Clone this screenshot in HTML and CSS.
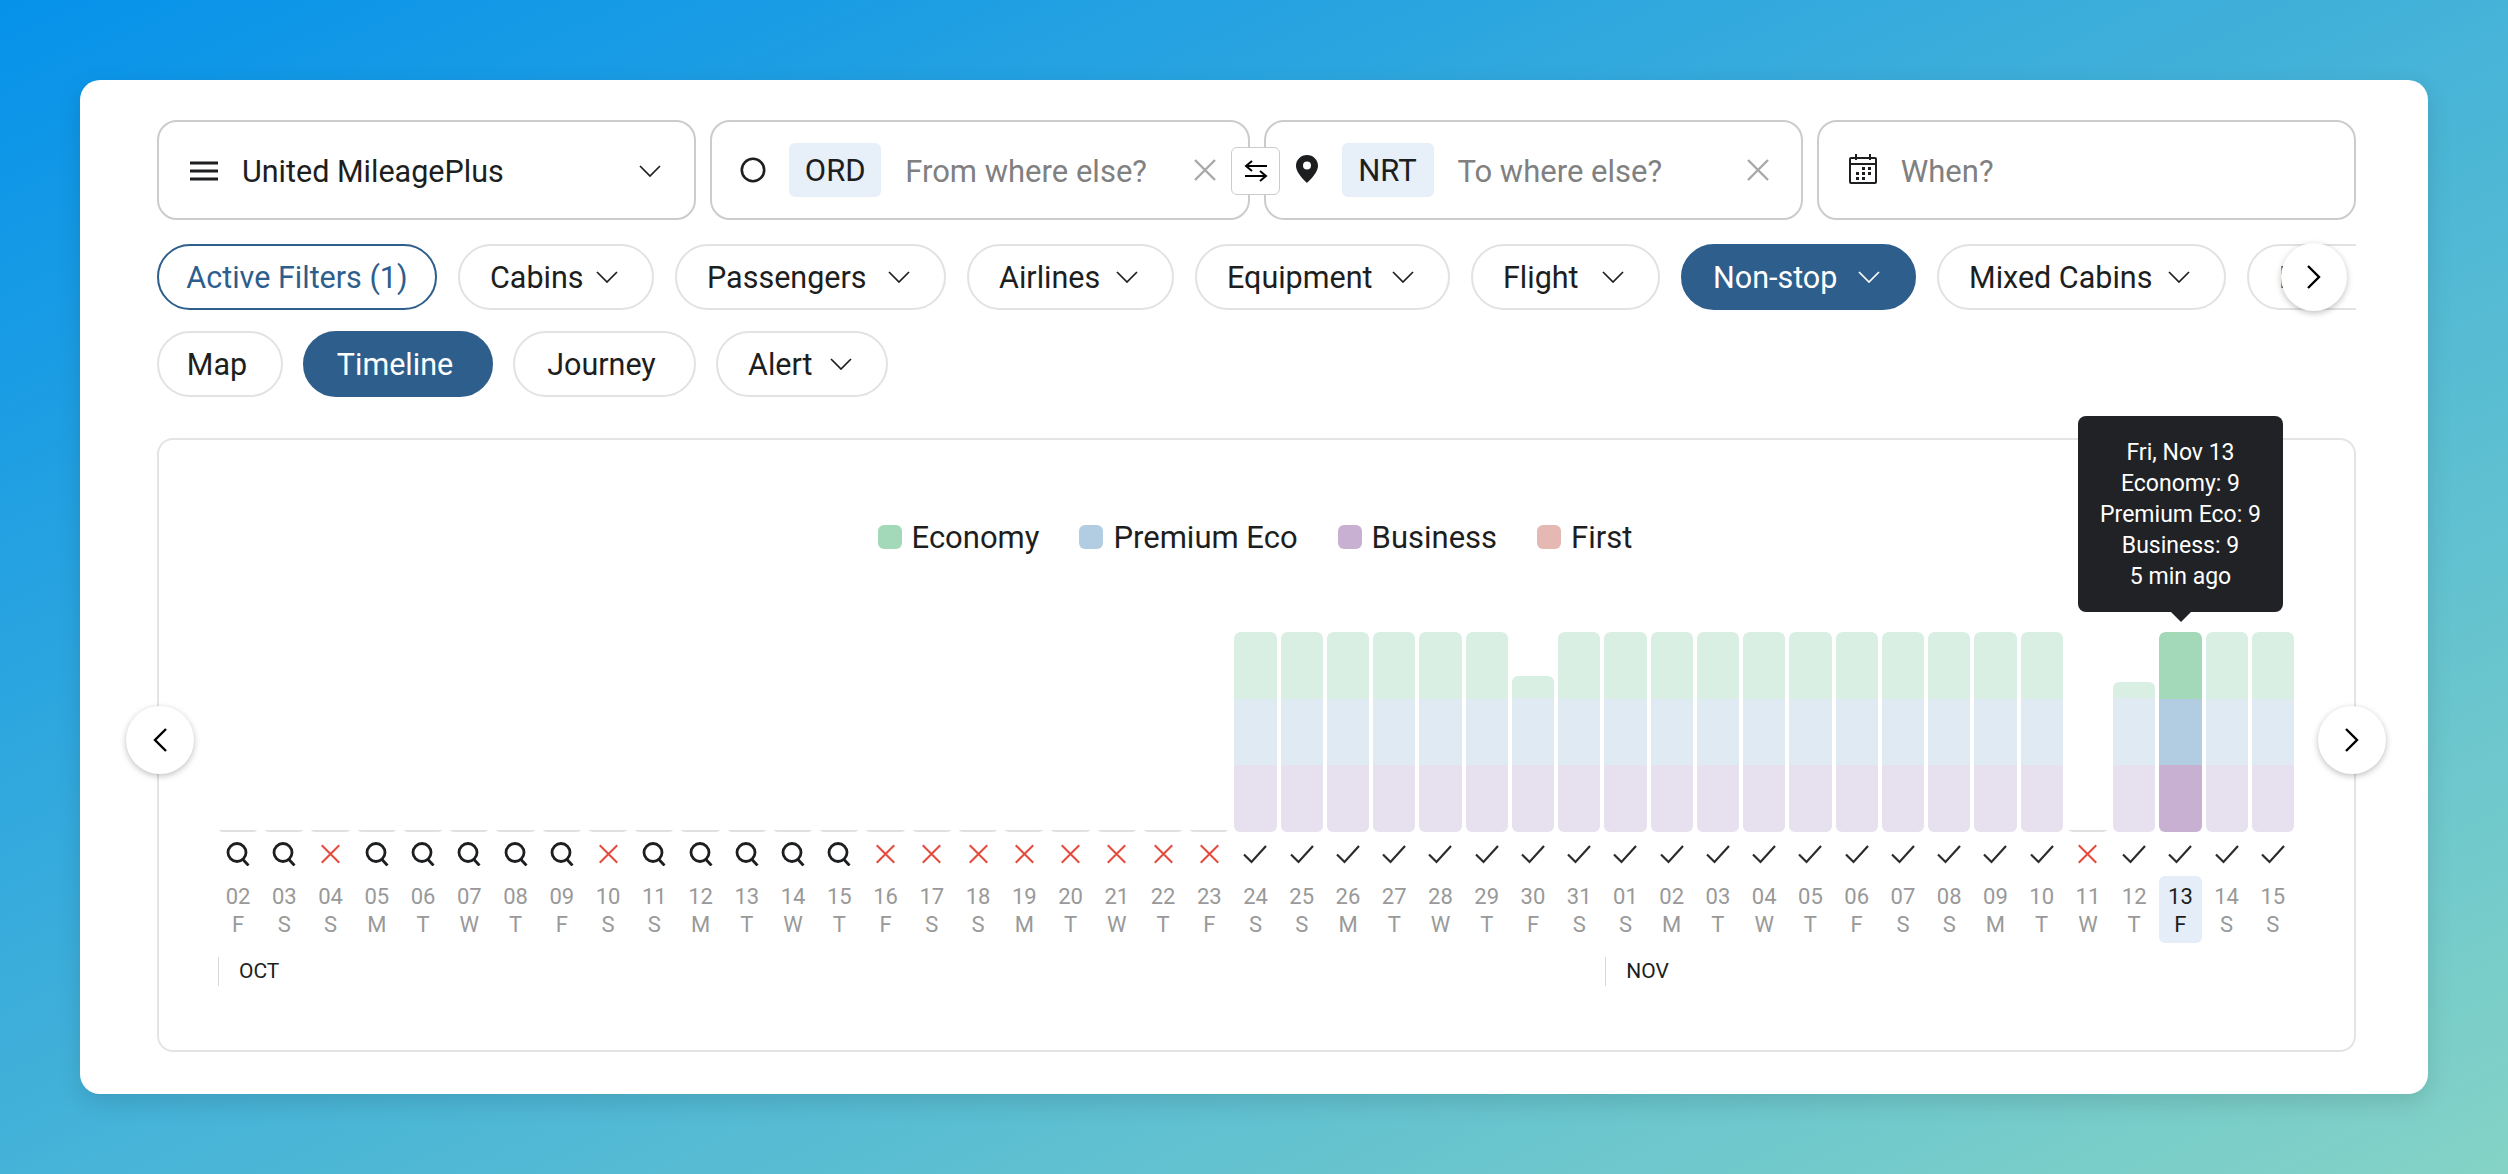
FILE: index.html
```html
<!DOCTYPE html>
<html>
<head>
	<title>Award Timeline</title>

	<link rel="stylesheet" href="styles.css">
</head>
<body>
	<svg class="iconDefs">
		<symbol id="chevron" viewBox="0 0 22 12"><path d="M1 1l10 10L21 1" fill="none" stroke="currentColor" stroke-width="1.7"/></symbol>
		<symbol id="cross" viewBox="0 0 24 22"><path d="M2 1l20 20M22 1L2 21" fill="none" stroke="currentColor" stroke-width="2.4"/></symbol>
		<symbol id="search" viewBox="0 0 24 24"><circle cx="11" cy="10.5" r="9" fill="none" stroke="currentColor" stroke-width="2.8"/><path d="M16.5 17l6 6.5" fill="none" stroke="currentColor" stroke-width="2.8"/></symbol>
		<symbol id="check" viewBox="0 0 24 20"><path d="M1 10.5l7.5 7.5L23 2" fill="none" stroke="currentColor" stroke-width="2.2"/></symbol>
		<symbol id="prev" viewBox="0 0 14 24"><path d="M13 1L2 12l11 11" fill="none" stroke="currentColor" stroke-width="2.4"/></symbol>
		<symbol id="next" viewBox="0 0 14 24"><path d="M1 1l11 11L1 23" fill="none" stroke="currentColor" stroke-width="2.4"/></symbol>
	</svg>

	<main class="card">
		<div class="search-row">
			<div class="field">
				<svg class="icon-menu" viewBox="0 0 28 20"><path d="M0 2h28M0 10h28M0 18h28" stroke="currentColor" stroke-width="3"/></svg>
				<span class="field-value">United MileagePlus</span>
				<svg class="chevron field-chevron"><use href="#chevron"/></svg>
			</div>
			<div class="field">
				<svg class="icon-origin" viewBox="0 0 26 26"><circle cx="13" cy="13" r="11.2" fill="none" stroke="currentColor" stroke-width="2.6"/></svg>
				<span class="code">ORD</span>
				<span class="placeholder">From where else?</span>
				<svg class="clear"><use href="#cross"/></svg>
			</div>
			<div class="field">
				<svg class="icon-pin" viewBox="0 0 22 28"><path fill-rule="evenodd" d="M11 0C4.9 0 0 4.8 0 10.8 0 18.5 11 28 11 28s11-9.5 11-17.2C22 4.8 17.1 0 11 0zm0 14.5a4 4 0 1 1 0-8 4 4 0 0 1 0 8z" fill="currentColor"/></svg>
				<span class="code">NRT</span>
				<span class="placeholder">To where else?</span>
				<svg class="clear"><use href="#cross"/></svg>
			</div>
			<div class="field">
				<svg class="icon-calendar" viewBox="0 0 28 30">
					<path d="M2 4h24a1 1 0 0 1 1 1v23a1 1 0 0 1-1 1H2a1 1 0 0 1-1-1V5a1 1 0 0 1 1-1zM1 10h26M7 0v6M21 0v6" fill="none" stroke="currentColor" stroke-width="2"/>
					<path d="M13 13h3v3h-3zM19 13h3v3h-3zM7 18h3v3H7zM13 18h3v3h-3zM19 18h3v3h-3zM7 23h3v3H7zM13 23h3v3h-3z" fill="currentColor"/>
				</svg>
				<span class="placeholder">When?</span>
			</div>
			<button class="swap">
				<svg viewBox="0 0 24 22"><path d="M23 6H2M8 1L2 6l6 5M1 16h21M16 11l6 5-6 5" fill="none" stroke="currentColor" stroke-width="2"/></svg>
			</button>
		</div>

		<div class="filter-wrap">
			<div class="pill-row filters">
				<span class="pill pill-outline pill-active">Active Filters (1)</span>
				<span class="pill pill-cabins">Cabins <svg class="chevron"><use href="#chevron"/></svg></span>
				<span class="pill pill-passengers">Passengers <svg class="chevron"><use href="#chevron"/></svg></span>
				<span class="pill pill-airlines">Airlines <svg class="chevron"><use href="#chevron"/></svg></span>
				<span class="pill pill-equipment">Equipment <svg class="chevron"><use href="#chevron"/></svg></span>
				<span class="pill pill-flight">Flight <svg class="chevron"><use href="#chevron"/></svg></span>
				<span class="pill pill-on pill-nonstop">Non-stop <svg class="chevron"><use href="#chevron"/></svg></span>
				<span class="pill pill-mixed">Mixed Cabins <svg class="chevron"><use href="#chevron"/></svg></span>
				<span class="pill pill-fare">Fare <svg class="chevron"><use href="#chevron"/></svg></span>
			</div>
			<button class="round-btn filters-next"><svg><use href="#next"/></svg></button>
		</div>

		<div class="pill-row views">
			<span class="pill pill-plain pill-map">Map</span>
			<span class="pill pill-plain pill-on pill-timeline">Timeline</span>
			<span class="pill pill-plain pill-journey">Journey</span>
			<span class="pill pill-alert">Alert <svg class="chevron"><use href="#chevron"/></svg></span>
		</div>

		<section class="chart">
			<div class="legend">
				<span class="legend-item"><i class="swatch economy"></i>Economy</span>
				<span class="legend-item"><i class="swatch premium"></i>Premium Eco</span>
				<span class="legend-item"><i class="swatch business"></i>Business</span>
				<span class="legend-item"><i class="swatch first"></i>First</span>
			</div>

			<div class="days">
				<div class="day"><div class="bar"></div><svg class="status"><use href="#search"/></svg><div class="date">02<br>F</div></div>
				<div class="day"><div class="bar"></div><svg class="status"><use href="#search"/></svg><div class="date">03<br>S</div></div>
				<div class="day"><div class="bar"></div><svg class="status miss"><use href="#cross"/></svg><div class="date">04<br>S</div></div>
				<div class="day"><div class="bar"></div><svg class="status"><use href="#search"/></svg><div class="date">05<br>M</div></div>
				<div class="day"><div class="bar"></div><svg class="status"><use href="#search"/></svg><div class="date">06<br>T</div></div>
				<div class="day"><div class="bar"></div><svg class="status"><use href="#search"/></svg><div class="date">07<br>W</div></div>
				<div class="day"><div class="bar"></div><svg class="status"><use href="#search"/></svg><div class="date">08<br>T</div></div>
				<div class="day"><div class="bar"></div><svg class="status"><use href="#search"/></svg><div class="date">09<br>F</div></div>
				<div class="day"><div class="bar"></div><svg class="status miss"><use href="#cross"/></svg><div class="date">10<br>S</div></div>
				<div class="day"><div class="bar"></div><svg class="status"><use href="#search"/></svg><div class="date">11<br>S</div></div>
				<div class="day"><div class="bar"></div><svg class="status"><use href="#search"/></svg><div class="date">12<br>M</div></div>
				<div class="day"><div class="bar"></div><svg class="status"><use href="#search"/></svg><div class="date">13<br>T</div></div>
				<div class="day"><div class="bar"></div><svg class="status"><use href="#search"/></svg><div class="date">14<br>W</div></div>
				<div class="day"><div class="bar"></div><svg class="status"><use href="#search"/></svg><div class="date">15<br>T</div></div>
				<div class="day"><div class="bar"></div><svg class="status miss"><use href="#cross"/></svg><div class="date">16<br>F</div></div>
				<div class="day"><div class="bar"></div><svg class="status miss"><use href="#cross"/></svg><div class="date">17<br>S</div></div>
				<div class="day"><div class="bar"></div><svg class="status miss"><use href="#cross"/></svg><div class="date">18<br>S</div></div>
				<div class="day"><div class="bar"></div><svg class="status miss"><use href="#cross"/></svg><div class="date">19<br>M</div></div>
				<div class="day"><div class="bar"></div><svg class="status miss"><use href="#cross"/></svg><div class="date">20<br>T</div></div>
				<div class="day"><div class="bar"></div><svg class="status miss"><use href="#cross"/></svg><div class="date">21<br>W</div></div>
				<div class="day"><div class="bar"></div><svg class="status miss"><use href="#cross"/></svg><div class="date">22<br>T</div></div>
				<div class="day"><div class="bar"></div><svg class="status miss"><use href="#cross"/></svg><div class="date">23<br>F</div></div>
				<div class="day"><div class="bar full"><i class="economy"></i><i class="premium"></i><i class="business"></i></div><svg class="status ok"><use href="#check"/></svg><div class="date">24<br>S</div></div>
				<div class="day"><div class="bar full"><i class="economy"></i><i class="premium"></i><i class="business"></i></div><svg class="status ok"><use href="#check"/></svg><div class="date">25<br>S</div></div>
				<div class="day"><div class="bar full"><i class="economy"></i><i class="premium"></i><i class="business"></i></div><svg class="status ok"><use href="#check"/></svg><div class="date">26<br>M</div></div>
				<div class="day"><div class="bar full"><i class="economy"></i><i class="premium"></i><i class="business"></i></div><svg class="status ok"><use href="#check"/></svg><div class="date">27<br>T</div></div>
				<div class="day"><div class="bar full"><i class="economy"></i><i class="premium"></i><i class="business"></i></div><svg class="status ok"><use href="#check"/></svg><div class="date">28<br>W</div></div>
				<div class="day"><div class="bar full"><i class="economy"></i><i class="premium"></i><i class="business"></i></div><svg class="status ok"><use href="#check"/></svg><div class="date">29<br>T</div></div>
				<div class="day"><div class="bar full"><i class="economy short"></i><i class="premium"></i><i class="business"></i></div><svg class="status ok"><use href="#check"/></svg><div class="date">30<br>F</div></div>
				<div class="day"><div class="bar full"><i class="economy"></i><i class="premium"></i><i class="business"></i></div><svg class="status ok"><use href="#check"/></svg><div class="date">31<br>S</div></div>
				<div class="day"><div class="bar full"><i class="economy"></i><i class="premium"></i><i class="business"></i></div><svg class="status ok"><use href="#check"/></svg><div class="date">01<br>S</div></div>
				<div class="day"><div class="bar full"><i class="economy"></i><i class="premium"></i><i class="business"></i></div><svg class="status ok"><use href="#check"/></svg><div class="date">02<br>M</div></div>
				<div class="day"><div class="bar full"><i class="economy"></i><i class="premium"></i><i class="business"></i></div><svg class="status ok"><use href="#check"/></svg><div class="date">03<br>T</div></div>
				<div class="day"><div class="bar full"><i class="economy"></i><i class="premium"></i><i class="business"></i></div><svg class="status ok"><use href="#check"/></svg><div class="date">04<br>W</div></div>
				<div class="day"><div class="bar full"><i class="economy"></i><i class="premium"></i><i class="business"></i></div><svg class="status ok"><use href="#check"/></svg><div class="date">05<br>T</div></div>
				<div class="day"><div class="bar full"><i class="economy"></i><i class="premium"></i><i class="business"></i></div><svg class="status ok"><use href="#check"/></svg><div class="date">06<br>F</div></div>
				<div class="day"><div class="bar full"><i class="economy"></i><i class="premium"></i><i class="business"></i></div><svg class="status ok"><use href="#check"/></svg><div class="date">07<br>S</div></div>
				<div class="day"><div class="bar full"><i class="economy"></i><i class="premium"></i><i class="business"></i></div><svg class="status ok"><use href="#check"/></svg><div class="date">08<br>S</div></div>
				<div class="day"><div class="bar full"><i class="economy"></i><i class="premium"></i><i class="business"></i></div><svg class="status ok"><use href="#check"/></svg><div class="date">09<br>M</div></div>
				<div class="day"><div class="bar full"><i class="economy"></i><i class="premium"></i><i class="business"></i></div><svg class="status ok"><use href="#check"/></svg><div class="date">10<br>T</div></div>
				<div class="day"><div class="bar"></div><svg class="status miss"><use href="#cross"/></svg><div class="date">11<br>W</div></div>
				<div class="day"><div class="bar full"><i class="economy shorter"></i><i class="premium"></i><i class="business"></i></div><svg class="status ok"><use href="#check"/></svg><div class="date">12<br>T</div></div>
				<div class="day selected"><div class="bar full"><i class="economy"></i><i class="premium"></i><i class="business"></i></div><svg class="status ok"><use href="#check"/></svg><div class="date">13<br>F</div></div>
				<div class="day"><div class="bar full"><i class="economy"></i><i class="premium"></i><i class="business"></i></div><svg class="status ok"><use href="#check"/></svg><div class="date">14<br>S</div></div>
				<div class="day"><div class="bar full"><i class="economy"></i><i class="premium"></i><i class="business"></i></div><svg class="status ok"><use href="#check"/></svg><div class="date">15<br>S</div></div>
			</div>

			<div class="months">
				<span class="month">OCT</span>
				<span class="month">NOV</span>
			</div>

			<div class="tooltip">
				Fri, Nov 13<br>
				Economy: 9<br>
				Premium Eco: 9<br>
				Business: 9<br>
				5 min ago
			</div>
			<button class="round-btn chart-prev"><svg><use href="#prev"/></svg></button>
			<button class="round-btn chart-next"><svg><use href="#next"/></svg></button>
		</section>
	</main>
</body>
</html>
```

FILE: styles.css
```css
:root {
	font-family: Roboto, "Noto Sans", sans-serif;
	color: #1d1e20;
}
html, body {
	height: 100%;
}
body {
	margin: 0;
	padding: 80px;
	box-sizing: border-box;
	background: linear-gradient(to bottom right, #0692ea, #84d3c6);
	overflow: hidden;
}
.iconDefs {
	display: none;
}
.card {
	height: 1014px;
	box-sizing: border-box;
	padding: 40px 72px 0 77px;
	background: #fff;
	border-radius: 20px;
	box-shadow: 0 8px 24px rgba(0, 0, 0, 0.12);
}

/* search fields */
.search-row {
	position: relative;
	display: grid;
	grid-template-columns: repeat(4, 1fr);
	gap: 14px;
}
.field {
	display: flex;
	align-items: center;
	height: 100px;
	box-sizing: border-box;
	padding: 2px 31px 0;
	border: 2px solid #ccc;
	border-radius: 20px;
	font-size: 31px;
	white-space: nowrap;
}
.field-value {
	flex: 1;
	font-size: 30.5px;
}
.field-chevron {
	margin-right: 2px;
}
.icon-menu {
	width: 28px;
	height: 20px;
	margin-right: 24px;
}
.icon-origin {
	width: 26px;
	height: 26px;
	margin: -3px 23px 0 -3px;
}
.icon-pin {
	width: 22px;
	height: 28px;
	margin: -4px 24px 0 -1px;
}
.icon-calendar {
	width: 28px;
	height: 30px;
	margin: -4px 24px 0 -1px;
}
.code {
	width: 92px;
	height: 54px;
	margin: -2px 24px 0 0;
	background: #e7eff8;
	border-radius: 6px;
	line-height: 56px;
	text-align: center;
}
.placeholder {
	flex: 1;
	color: #808080;
}
.clear {
	width: 24px;
	height: 22px;
	margin-top: -2px;
	color: #a8a8a8;
}
.swap {
	position: absolute;
	left: 1074px;
	top: 27px;
	width: 49px;
	height: 48px;
	padding: 0;
	background: #fff;
	border: 1px solid #ccc;
	border-radius: 6px;
}
.swap svg {
	display: block;
	width: 24px;
	height: 22px;
	margin: auto;
}

/* pills */
.filter-wrap {
	position: relative;
	margin-top: 24px;
}
.pill-row {
	display: flex;
	gap: 21px;
}
.filters {
	overflow: hidden;
}
.views {
	gap: 20px;
	margin-top: 21px;
}
.pill {
	flex: none;
	display: flex;
	align-items: center;
	justify-content: space-between;
	height: 66px;
	box-sizing: border-box;
	padding: 0 34px 0 30px;
	border: 2px solid #e2e2e2;
	border-radius: 33px;
	font-size: 30.5px;
	white-space: nowrap;
}
.pill-outline {
	color: #2e5e8c;
	border-color: #2e5e8c;
}
.pill-on {
	color: #fff;
	background: #2e5e8c;
	border-color: #2e5e8c;
}
.pill-plain {
	justify-content: center;
	padding: 0 6px 0 0;
}
.pill-active {
	width: 280px;
	justify-content: center;
	padding: 0;
}
.pill-cabins {
	width: 196px;
}
.pill-passengers {
	width: 271px;
}
.pill-airlines {
	width: 207px;
}
.pill-equipment {
	width: 255px;
}
.pill-flight {
	width: 189px;
}
.pill-nonstop {
	width: 235px;
}
.pill-mixed {
	width: 289px;
}
.pill-fare {
	width: 180px;
}
.pill-map {
	width: 126px;
}
.pill-timeline {
	width: 190px;
}
.pill-journey {
	width: 183px;
}
.pill-alert {
	width: 172px;
}
.chevron {
	flex: none;
	width: 22px;
	height: 12px;
}
.round-btn {
	position: absolute;
	padding: 0;
	background: #fff;
	border: 0;
	border-radius: 50%;
	box-shadow: 0 2px 6px rgba(0, 0, 0, 0.25);
}
.round-btn svg {
	display: block;
	width: 14px;
	height: 24px;
	margin: auto;
}
.filters-next {
	top: -1px;
	right: 9px;
	width: 66px;
	height: 68px;
}

/* chart */
.chart {
	position: relative;
	height: 614px;
	box-sizing: border-box;
	margin-top: 41px;
	padding: 84px 58px 0 56px;
	border: 2px solid #e4e4e4;
	border-radius: 16px;
}
.legend {
	display: flex;
	justify-content: center;
	gap: 40px;
	height: 26px;
	padding-right: 1px;
	font-size: 31px;
}
.legend-item {
	display: flex;
	align-items: center;
	gap: 10px;
}
.swatch {
	width: 24px;
	height: 24px;
	border-radius: 6px;
}
.swatch.economy {
	background: #a3d8b9;
}
.swatch.premium {
	background: #b2cde1;
}
.swatch.business {
	background: #c7b0d2;
}
.swatch.first {
	background: #e5b8b3;
}
.days {
	display: grid;
	grid-template-columns: repeat(45, 1fr);
	margin-top: 82px;
}
.day {
	display: flex;
	flex-direction: column;
	align-items: center;
}
.bar {
	align-self: stretch;
	display: flex;
	flex-direction: column;
	justify-content: flex-end;
	height: 200px;
	margin: 0 2px;
	overflow: hidden;
	border-radius: 6px;
}
.bar:empty::after {
	content: "";
	height: 2px;
	margin: 0 2px;
	background: #e0e0e0;
	border-radius: 1px;
}
.bar i {
	display: block;
	height: 67px;
}
.bar .economy {
	margin-top: auto;
	background: #daefe3;
	border-radius: 6px 6px 0 0;
}
.bar .economy.short {
	height: 22px;
}
.bar .economy.shorter {
	height: 16px;
}
.bar .premium {
	background: #dfeaf3;
}
.bar .business {
	background: #e7e0ef;
}
.selected .bar .economy {
	background: #a3d8b9;
}
.selected .bar .premium {
	background: #b2cde1;
}
.selected .bar .business {
	background: #c7b0d2;
}
.status {
	width: 24px;
	height: 24px;
	margin-top: 10px;
}
.status.miss {
	width: 21px;
	color: #e54b3c;
}
.status.ok {
	color: #2b2b2d;
}
.date {
	align-self: stretch;
	margin: 10px 2px 0;
	padding: 7px 0 4px;
	border-radius: 6px;
	font-size: 22px;
	line-height: 28px;
	text-align: center;
	color: #999;
}
.selected .date {
	background: #e4edf8;
	color: #1d1e20;
}
.months {
	display: grid;
	grid-template-columns: 30fr 15fr;
	margin: 14px 0 0;
}
.month {
	margin-left: 3px;
	padding-left: 20px;
	border-left: 1px solid #d8d8d8;
	font-size: 21px;
	line-height: 29px;
}
.tooltip {
	position: absolute;
	left: 1919px;
	top: -24px;
	width: 205px;
	height: 196px;
	box-sizing: border-box;
	padding: 21px 0;
	background: #212225;
	border-radius: 8px;
	color: #fff;
	font-size: 23px;
	line-height: 31px;
	text-align: center;
}
.tooltip::after {
	content: "";
	position: absolute;
	left: 50%;
	bottom: -10px;
	margin-left: -10px;
	border: solid transparent;
	border-width: 10px 10px 0;
	border-top-color: #212225;
}
.chart-prev, .chart-next {
	top: 266px;
	width: 68px;
	height: 68px;
}
.chart-prev {
	left: -33px;
}
.chart-next {
	right: -32px;
}
```
